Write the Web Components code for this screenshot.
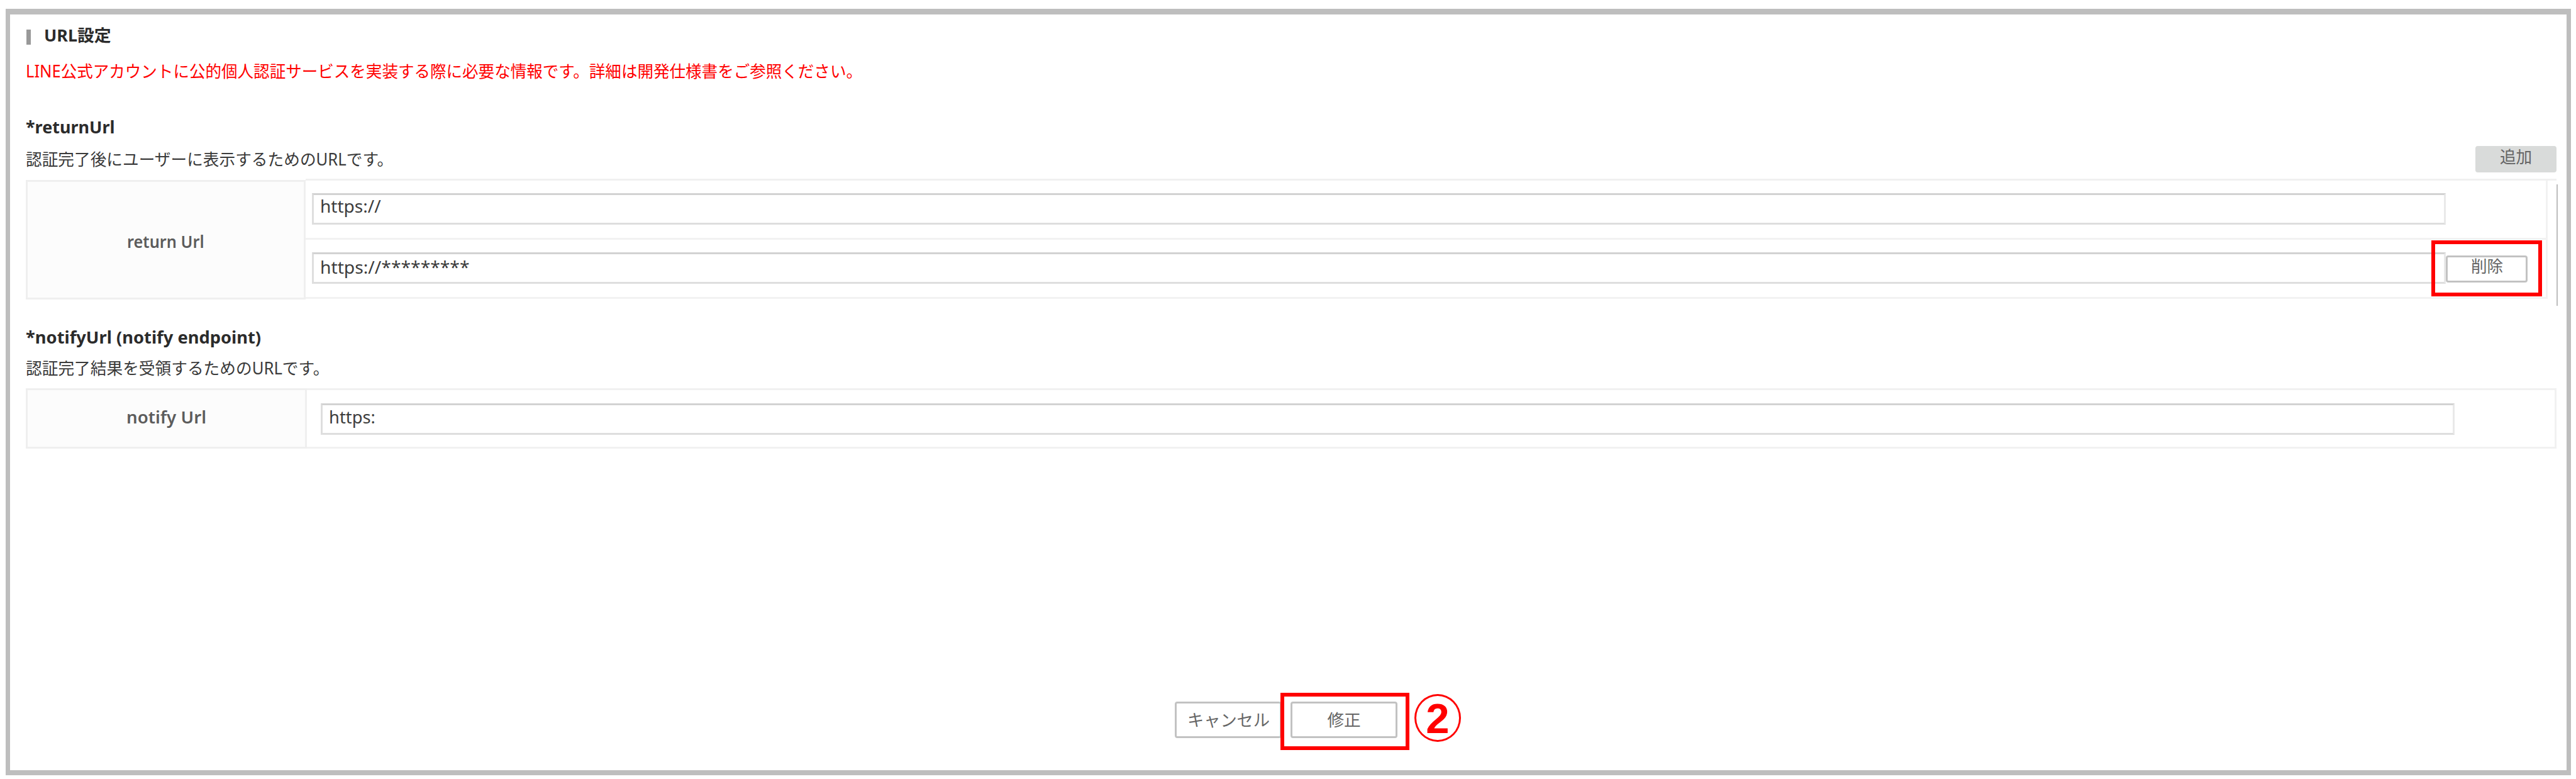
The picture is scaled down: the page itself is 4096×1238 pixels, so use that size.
<!DOCTYPE html>
<html lang="ja">
<head>
<meta charset="utf-8">
<title>URL設定</title>
<style>
  html, body {
    margin: 0;
    background: #fff;
  }
  body {
    overflow: hidden;
    font-family: "Noto Sans", "Noto Sans CJK JP", sans-serif;
    font-size: 26.6px;
    line-height: 30px;
    color: #3a3a3a;
  }
</style>
</head>
<body>
<url-settings></url-settings>

<script>
// one line of text, squeezed or stretched to the given width
class FitText extends HTMLElement {
  connectedCallback() {
    const shadowRoot = this.attachShadow({ mode: "open" });
    shadowRoot.innerHTML = `
    <style>
      :host {
        display: block;
        flex: none;
        white-space: nowrap;
      }
      span {
        display: inline-block;
        transform-origin: 0 50%;
      }
    </style>
    <span><slot></slot></span>
    `;
    const width = Number(this.getAttribute("width"));
    this.style.width = width + "px";
    const span = shadowRoot.querySelector("span");
    span.style.transform = `scaleX(${width / span.offsetWidth})`;
  }
}

class UrlInput extends HTMLElement {
  connectedCallback() {
    const shadowRoot = this.attachShadow({ mode: "open" });
    shadowRoot.innerHTML = `
    <style>
      :host {
        display: flex;
        align-items: center;
        box-sizing: border-box;
        width: 3393px;
        height: 50px;
        padding-left: 10px;
        border: 3px solid #dedede;
        border-top-color: #d2d2d2;
        border-right-color: #e9e9e9;
        background: #fff;
        color: #3c3c3c;
      }
    </style>
    <slot></slot>
    `;
  }
}

class FormButton extends HTMLElement {
  connectedCallback() {
    const shadowRoot = this.attachShadow({ mode: "open" });
    shadowRoot.innerHTML = `
    <style>
      :host {
        display: flex;
        flex: none;
        justify-content: center;
        align-items: center;
        box-sizing: border-box;
        position: relative;
        border: 3px solid #c2c2c2;
        border-radius: 4px;
        background: #fff;
        color: #666;
      }
      :host([filled]) {
        border-color: #d9dbda;
        background: #d9dbda;
      }
    </style>
    <slot></slot>
    `;
  }
}

// red frame laid over the button it is placed in
class RedFrame extends HTMLElement {
  connectedCallback() {
    const shadowRoot = this.attachShadow({ mode: "open" });
    shadowRoot.innerHTML = `
    <style>
      :host {
        display: block;
        position: absolute;
        border: 6px solid #f00;
      }
    </style>
    `;
  }
}

class StepBadge extends HTMLElement {
  connectedCallback() {
    const shadowRoot = this.attachShadow({ mode: "open" });
    shadowRoot.innerHTML = `
    <style>
      :host {
        display: flex;
        justify-content: center;
        align-items: center;
        box-sizing: border-box;
        width: 74px;
        height: 76px;
        padding-top: 2px;
        border: 3px solid #f00;
        border-radius: 50%;
        color: #f00;
        font: bold 67px/68px "Liberation Sans", sans-serif;
      }
    </style>
    <slot></slot>
    `;
  }
}

class UrlSettings extends HTMLElement {
  connectedCallback() {
    const shadowRoot = this.attachShadow({ mode: "open" });
    shadowRoot.innerHTML = `
    <style>
      :host {
        display: flex;
        padding: 14px 0 0 9px;
      }
      .panel {
        box-sizing: border-box;
        width: 4079px;
        height: 1218px;
        padding: 18px 0 0 25px;
        border: solid #bebebe;
        border-width: 9px 7px 8px 7px;
      }
      .title {
        display: flex;
        gap: 21px;
        font-weight: bold;
        color: #2b2b2b;
      }
      .bar {
        width: 7px;
        height: 24px;
        margin-top: 6px;
        margin-left: 1px;
        background: #999;
      }
      .note {
        margin-top: 27px;
        color: #f00;
      }
      .name {
        font-weight: bold;
        color: #2b2b2b;
      }
      .return-name {
        margin-top: 59px;
      }
      .notify-name {
        margin-top: 35px;
      }
      .desc {
        display: flex;
        justify-content: space-between;
        width: 4024px;
      }
      .return-desc {
        margin-top: 15px;
        height: 42px;
      }
      .return-desc > fit-text {
        margin-top: 6px;
      }
      .notify-desc {
        margin-top: 19px;
      }
      .add {
        width: 129px;
        height: 42px;
        padding-bottom: 9px;
      }
      .head {
        display: flex;
        justify-content: center;
        align-items: center;
        box-sizing: border-box;
        border: 3px solid #efefef;
        background: #fcfcfc;
        font-weight: 600;
        color: #5c5c5c;
      }
      .return-table {
        display: grid;
        grid-template-columns: 445px 3579px 3px;
        align-items: start;
        width: 4027px;
        height: 202px;
        margin-top: 10px;
      }
      .return-table .head {
        height: 190px;
        margin-top: 2px;
        padding-top: 5px;
      }
      .rows {
        border-top: 3px solid #f0f0f0;
      }
      .row {
        display: flex;
        align-items: flex-start;
        box-sizing: border-box;
        width: 3565px;
        height: 94px;
        padding: 20px 0 0 10px;
        border: solid #f2f2f2;
        border-width: 0 3px 3px 0;
      }
      .row url-input {
        flex: none;
      }
      .row:first-child url-input {
        padding-bottom: 8px;
      }
      .row:last-child url-input {
        padding-bottom: 2px;
      }
      .delete {
        width: 130px;
        height: 43px;
        margin-top: 5px;
        padding-bottom: 10px;
      }
      .delete red-frame {
        inset: -27px -26px -25px -26px;
      }
      .side {
        width: 2px;
        height: 193px;
        margin-top: 9px;
        background: #bdbdbd;
      }
      .notify-table {
        display: grid;
        grid-template-columns: 447px 1fr;
        box-sizing: border-box;
        width: 4024px;
        height: 96px;
        margin-top: 17px;
      }
      .notify-table .head {
        padding-bottom: 5px;
      }
      .cell {
        padding: 21px 0 0 22px;
        border: solid #f1f1f1;
        border-width: 3px 3px 3px 0;
      }
      .cell url-input {
        padding-bottom: 6px;
      }
      .actions {
        display: flex;
        align-items: flex-start;
        margin: 402px 0 0 1827px;
      }
      .cancel {
        width: 170px;
        height: 58px;
      }
      .modify {
        width: 170px;
        height: 58px;
        margin-left: 14px;
      }
      .modify red-frame {
        inset: -17px -22px -22px -19px;
      }
      step-badge {
        margin: -12px 0 0 27px;
      }
    </style>
    <div class="panel">
      <div class="title">
        <div class="bar"></div>
        <fit-text width="107">URL設定</fit-text>
      </div>
      <fit-text class="note" width="1330">LINE公式アカウントに公的個人認証サービスを実装する際に必要な情報です。詳細は開発仕様書をご参照ください。</fit-text>

      <fit-text class="name return-name" width="142">*returnUrl</fit-text>
      <div class="desc return-desc">
        <fit-text width="584">認証完了後にユーザーに表示するためのURLです。</fit-text>
        <form-button class="add" filled><fit-text width="51">追加</fit-text></form-button>
      </div>
      <div class="return-table">
        <div class="head"><fit-text width="123">return Url</fit-text></div>
        <div class="rows">
          <div class="row">
            <url-input><fit-text width="97">https://</fit-text></url-input>
          </div>
          <div class="row">
            <url-input><fit-text width="238">https://*********</fit-text></url-input>
            <form-button class="delete"><fit-text width="51">削除</fit-text><red-frame></red-frame></form-button>
          </div>
        </div>
        <div class="side"></div>
      </div>

      <fit-text class="name notify-name" width="374">*notifyUrl (notify endpoint)</fit-text>
      <div class="desc notify-desc">
        <fit-text width="482">認証完了結果を受領するためのURLです。</fit-text>
      </div>
      <div class="notify-table">
        <div class="head"><fit-text width="127">notify Url</fit-text></div>
        <div class="cell">
          <url-input><fit-text width="74">https:</fit-text></url-input>
        </div>
      </div>

      <div class="actions">
        <form-button class="cancel"><fit-text width="131">キャンセル</fit-text></form-button>
        <form-button class="modify"><fit-text width="53">修正</fit-text><red-frame></red-frame></form-button>
        <step-badge>2</step-badge>
      </div>
    </div>
    `;
  }
}

customElements.define("url-settings", UrlSettings);
customElements.define("url-input", UrlInput);
customElements.define("form-button", FormButton);
customElements.define("red-frame", RedFrame);
customElements.define("step-badge", StepBadge);
customElements.define("fit-text", FitText);
</script>
</body>
</html>
